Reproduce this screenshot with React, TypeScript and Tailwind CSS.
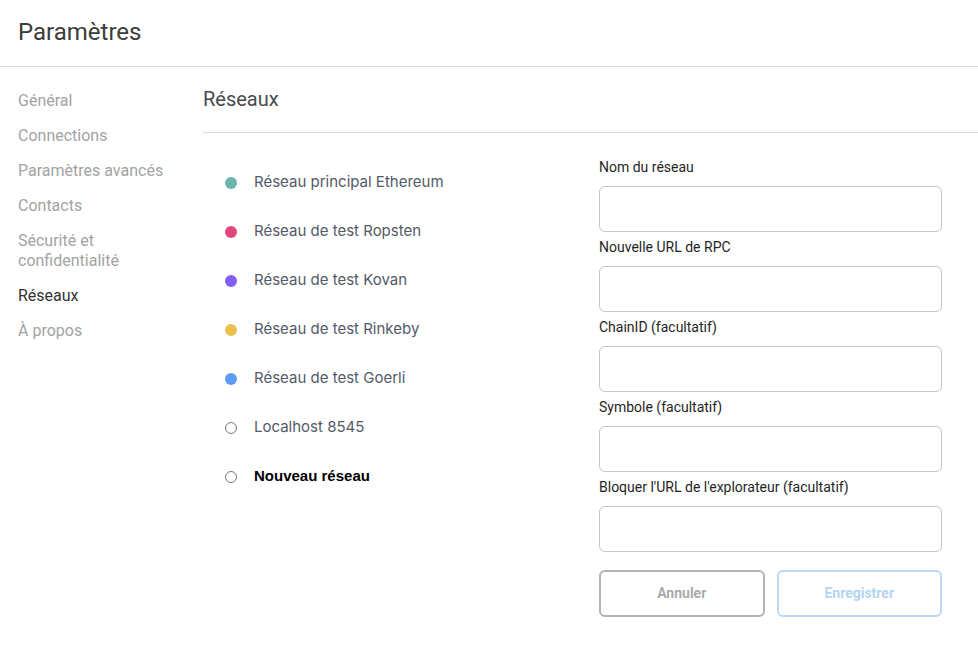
const menu = [
  { label: 'Général' },
  { label: 'Connections' },
  { label: 'Paramètres avancés' },
  { label: 'Contacts' },
  { label: 'Sécurité et confidentialité', wrap: true },
  { label: 'Réseaux', active: true },
  { label: 'À propos' },
]

const networks = [
  { name: 'Réseau principal Ethereum', color: 'bg-[#6ab5ad]' },
  { name: 'Réseau de test Ropsten', color: 'bg-[#e3467f]' },
  { name: 'Réseau de test Kovan', color: 'bg-[#845ef7]' },
  { name: 'Réseau de test Rinkeby', color: 'bg-[#ebc24c]' },
  { name: 'Réseau de test Goerli', color: 'bg-[#5d9cf0]' },
  { name: 'Localhost 8545', color: null },
  { name: 'Nouveau réseau', color: null, bold: true },
]

const fields = [
  'Nom du réseau',
  'Nouvelle URL de RPC',
  'ChainID (facultatif)',
  'Symbole (facultatif)',
  "Bloquer l'URL de l'explorateur (facultatif)",
]

export default function App() {
  return (
    <div className="w-[978px] h-[654px] bg-white font-['Roboto',sans-serif] overflow-hidden">
      <header className="h-[67px] border-b border-[#d9d9d9] flex items-center px-[18px]">
        <h1 className="text-[24px] text-[#3c3c3c] leading-none -mt-[3px]">Paramètres</h1>
      </header>

      <div className="flex">
        <nav className="w-[203px] flex-shrink-0 pl-[18px] pt-[24px] flex flex-col gap-[15px]">
          {menu.map((m) => (
            <div
              key={m.label}
              className={`text-[16px] leading-[20px] ${m.active ? 'text-[#333]' : 'text-[#a3a3a3]'} ${m.wrap ? 'w-[130px]' : ''}`}
            >
              {m.label}
            </div>
          ))}
        </nav>

        <main className="flex-1 min-w-0">
          <div className="h-[66px] border-b border-[#dcdcdc] flex items-center">
            <h2 className="text-[20px] text-[#4a4a4a] leading-none -mt-[1px]">Réseaux</h2>
          </div>

          <div className="flex">
            <ul className="w-[396px] flex-shrink-0 pl-[22px] pt-[25px] font-['Inter',sans-serif]">
              {networks.map((n) => (
                <li key={n.name} className="h-[49px] flex items-center gap-[17px]">
                  {n.color ? (
                    <span className={`w-[12px] h-[12px] rounded-full ${n.color}`} />
                  ) : (
                    <span className="w-[12px] h-[12px] rounded-full border border-[#777]" />
                  )}
                  <span
                    className={
                      n.bold
                        ? "text-[15px] font-bold text-black font-['Liberation_Sans',sans-serif]"
                        : 'text-[15px] text-[#535a68]'
                    }
                  >
                    {n.name}
                  </span>
                </li>
              ))}
            </ul>

            <div className="w-[343px] pt-[26px] flex flex-col">
              {fields.map((f) => (
                <div key={f} className="flex flex-col mb-[7px]">
                  <label className="text-[14px] text-[#1f1f1f] leading-[16px] mb-[11px]">{f}</label>
                  <input className="h-[46px] rounded-[6px] border border-[#c3c5c8] outline-none px-3" />
                </div>
              ))}
              <div className="flex gap-[12px] mt-[11px]">
                <button className="flex-1 h-[47px] rounded-[6px] border-2 border-[#b3b3b3] text-[14px] font-bold text-[#aaa]">
                  Annuler
                </button>
                <button className="flex-1 h-[47px] rounded-[6px] border-2 border-[#bcd9f5] text-[14px] font-bold text-[#b3d4f3]">
                  Enregistrer
                </button>
              </div>
            </div>
          </div>
        </main>
      </div>
    </div>
  )
}
